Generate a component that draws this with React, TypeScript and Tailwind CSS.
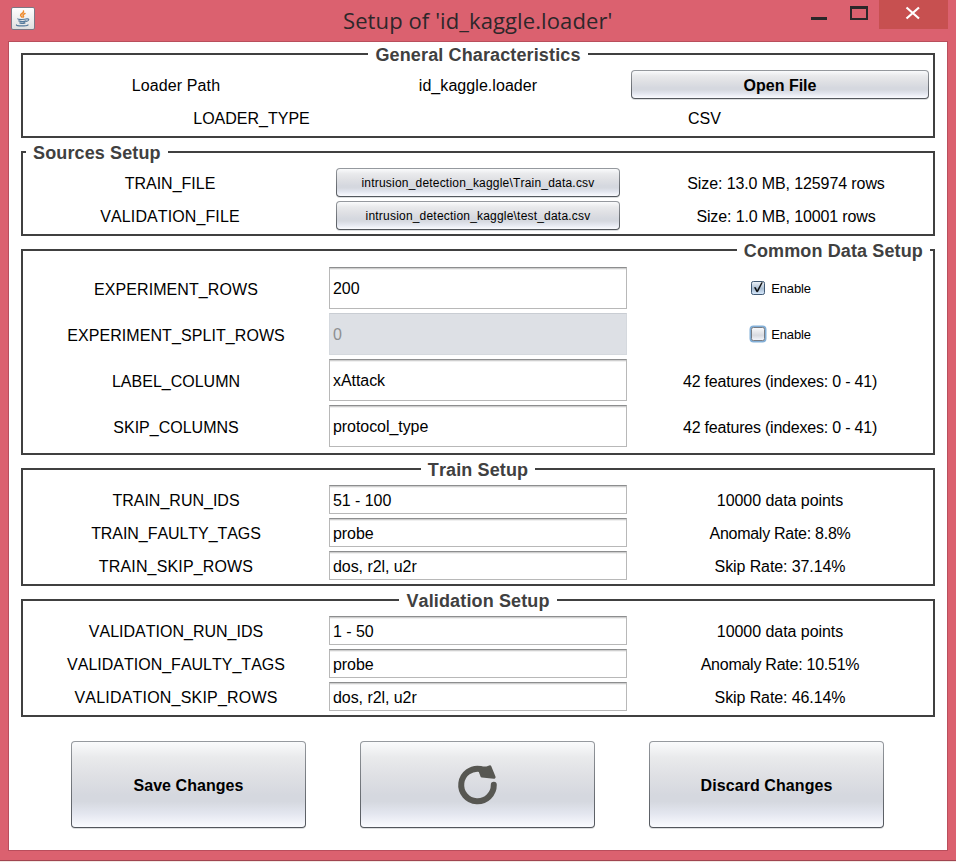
import React from "react";

const FONT = "font-['Liberation_Sans',Arial,sans-serif] [font-kerning:none]";

function Panel({ title, align = "center", pad = "pt-[15px] pb-1", children }: { title: string; align?: "left" | "center" | "right"; pad?: string; children: React.ReactNode }) {
  const line = "h-0.5 bg-[#404040]";
  return (
    <section className="flex w-[914px] flex-col">
      <header className="flex h-0.5 items-center">
        <span className={`${line} ${align === "left" ? "w-[5px]" : "flex-1"}`} />
        <h2 className="px-[7px] pt-0.5 text-[18px] leading-5 font-bold tracking-[0.13px] whitespace-nowrap text-[#404040]">{title}</h2>
        <span className={`${line} ${align === "right" ? "w-[5px]" : "flex-1"}`} />
      </header>
      <div className={`flex flex-col gap-1 border-x-2 border-b-2 border-[#404040] px-1 ${pad}`}>{children}</div>
    </section>
  );
}

function Row({ tall = false, wide = false, children }: { tall?: boolean; wide?: boolean; children: React.ReactNode }) {
  return (
    <div className={`grid auto-cols-fr grid-flow-col items-center justify-items-center ${wide ? "gap-6 px-px" : "gap-1"} ${tall ? "h-[42px]" : "h-[29px]"}`}>
      {children}
    </div>
  );
}

function Text({ className = "pt-0.5", children }: { className?: string; children: React.ReactNode }) {
  return <span className={`whitespace-nowrap ${className}`}>{children}</span>;
}

function Field({ value, disabled = false, tall = false }: { value: string; disabled?: boolean; tall?: boolean }) {
  return (
    <div
      className={`flex h-full w-full items-center border px-[3px] tracking-[-0.06px] ${tall ? "pt-px" : "pt-[3px]"} ${
        disabled
          ? "border-[#d5d9de] border-t-[#c9cdd3] bg-[#dde0e5] text-[#8e8f91]"
          : "border-[#b8b8b8] border-t-[#8d8e8f] bg-white shadow-[inset_0_1px_0_#cfcfcf,inset_0_2px_0_#f0f0f0]"
      }`}
    >
      {value}
    </div>
  );
}

function Button({ className, children }: { className: string; children: React.ReactNode }) {
  return (
    <button className={`rounded-[4px] bg-linear-to-b from-[#969a9f] to-[#52565c] p-px shadow-[0_1px_0_#dcdee0] ${className}`}>
      <span className="flex h-full w-full items-center justify-center rounded-[3px] bg-[linear-gradient(180deg,#fafbfc_0%,#e9eaec_18%,#dfe0e4_40%,#d5d8df_62%,#d5d8df_70%,#e3e6ef_84%,#fafbff_100%)]">
        {children}
      </span>
    </button>
  );
}

function Check({ checked = false }: { checked?: boolean }) {
  return (
    <label className="flex items-center gap-1 text-[13px] tracking-[-0.15px]">
      <svg width="18" height="18" viewBox="0 0 18 18">
        <defs>
          <linearGradient id="on" x2="0" y2="1">
            <stop stopColor="#f0f4f9" />
            <stop offset=".55" stopColor="#a9bdd2" />
            <stop offset="1" stopColor="#d9ebff" />
          </linearGradient>
          <linearGradient id="off" x2="0" y2="1">
            <stop stopColor="#fbfbfc" />
            <stop offset=".6" stopColor="#d8dae0" />
            <stop offset="1" stopColor="#f5f7fd" />
          </linearGradient>
        </defs>
        {!checked && <rect x="1.5" y="1.5" width="15" height="15" rx="3" fill="none" stroke="#82afd8" strokeWidth="2" />}
        <rect x="2.5" y="2.5" width="13" height="13" rx="1.8" fill={checked ? "url(#on)" : "url(#off)"} stroke={checked ? "#3f5873" : "#777c84"} />
        {checked && <path d="M5.4 8.500h1.200l1.500 3.200L12.600 3.600h.8L8.800 12.800H7.600z" fill="#000" stroke="#000" strokeWidth=".5" />}
      </svg>
      <span className="pt-0.5">Enable</span>
    </label>
  );
}

function JavaIcon() {
  return (
    <svg width="24" height="23" viewBox="0 0 24 23">
      <defs>
        <linearGradient id="tile" x2="0" y2="1">
          <stop stopColor="#ffffff" />
          <stop offset="1" stopColor="#dfdfdf" />
        </linearGradient>
      </defs>
      <rect x=".5" y=".5" width="23" height="22" rx="1.5" fill="url(#tile)" stroke="#7c7784" />
      <g fill="none" strokeLinecap="round">
        <path d="M12.500 4c.8 2-3.200 2.600-2.900 4.300.1.700 1 1.100 1.200 1.700M14 6.500c-2 .8-2.500 1.600-1.700 2.300.5.500.2.900-.3 1.300" stroke="#ee8b2d" strokeWidth="1.500" />
        <path d="M6.800 11.800c0 .9 7 .9 9.200 0M7.800 13.900c2 .8 5.500.8 7.200 0M8.800 15.900c1.500.6 3.800.6 5.200 0M16 12c2.500-.5 2.200 1.700-.5 2.300M5.500 17.900c-1 1.200 9.500 1.500 11.500 0" stroke="#54799b" strokeWidth="1.200" />
      </g>
    </svg>
  );
}

function Reload() {
  return (
    <svg width="39" height="39" viewBox="0 0 39 39" className="overflow-visible">
      <path d="M35.800 19.800A16.300 16.300 0 1 1 22.500 4" fill="none" stroke="#575752" strokeWidth="6" strokeLinecap="round" />
      <path d="M21 3h8L31.800 1.900 36 12.200 24 10.900z" fill="#575752" stroke="#575752" strokeWidth="3.200" strokeLinejoin="round" />
    </svg>
  );
}

function Triple({ label, value, info, infoClass = "pt-0.5", labelClass = "pt-0.5" }: { label: string; value: string; info: string; infoClass?: string; labelClass?: string }) {
  return (
    <Row>
      <Text className={labelClass}>{label}</Text>
      <Field value={value} />
      <Text className={infoClass}>{info}</Text>
    </Row>
  );
}

export default function App() {
  return (
    <div className={`flex h-[862px] w-[956px] flex-col overflow-hidden bg-[#db616f] text-[16px] leading-5 text-black ${FONT}`}>
      <header className="flex h-[41px] items-start pl-[11px] pr-2">
        <div className="w-[170px] pt-[7px]"><JavaIcon /></div>
        <h1 className="mt-[5px] ml-[162px] font-['Open_Sans','Noto_Sans',sans-serif] text-[22px] leading-[30px] tracking-[0.1px] whitespace-nowrap text-[#2d272a]">Setup of 'id_kaggle.loader'</h1>
        <svg className="ml-auto" width="146" height="29" viewBox="0 0 146 29" shapeRendering="crispEdges">
          <rect x="9" y="17" width="16" height="3" fill="#2b2729" />
          <path fillRule="evenodd" d="M48 6h18v14H48zM50 9v9h14V9z" fill="#2b2729" />
          <rect x="77" width="69" height="29" fill="#c75050" />
          <path d="M104.500 7.500l12.500 11M117 7.500l-12.500 11" stroke="#fff" strokeWidth="2.200" shapeRendering="auto" />
        </svg>
      </header>
      <main className="mx-2 flex h-[810px] flex-col items-center gap-[13px] border border-[#b94e5c] bg-white pt-[11px]">
        <Panel title="General Characteristics">
          <Row>
            <Text className="pt-0.5 tracking-[0.1px]">Loader Path</Text>
            <Text className="pt-0.5 tracking-[0.06px]">id_kaggle.loader</Text>
            <Button className="h-[29px] w-full font-bold"><Text>Open File</Text></Button>
          </Row>
          <Row>
            <Text>LOADER_TYPE</Text>
            <Text>CSV</Text>
          </Row>
        </Panel>
        <Panel title="Sources Setup" align="left">
          <Row wide>
            <Text>TRAIN_FILE</Text>
            <Button className="h-[29px] w-full text-[12px] tracking-[0.2px]">intrusion_detection_kaggle\Train_data.csv</Button>
            <Text className="pt-0.5 tracking-[-0.1px]">Size: 13.0 MB, 125974 rows</Text>
          </Row>
          <Row wide>
            <Text className="pt-0.5 tracking-[0.1px]">VALIDATION_FILE</Text>
            <Button className="h-[29px] w-full text-[12px] tracking-[0.2px]">intrusion_detection_kaggle\test_data.csv</Button>
            <Text className="pt-0.5 tracking-[-0.13px]">Size: 1.0 MB, 10001 rows</Text>
          </Row>
        </Panel>
        <Panel title="Common Data Setup" align="right" pad="pt-4 pb-1.5">
          <Row tall>
            <Text className="pt-[3px] tracking-[0.08px]">EXPERIMENT_ROWS</Text>
            <Field tall value="200" />
            <Check checked />
          </Row>
          <Row tall>
            <Text className="pt-[3px] tracking-[0.08px]">EXPERIMENT_SPLIT_ROWS</Text>
            <Field tall value="0" disabled />
            <Check />
          </Row>
          <Row tall>
            <Text className="pt-[3px]">LABEL_COLUMN</Text>
            <Field tall value="xAttack" />
            <Text className="pt-[3px] tracking-[-0.21px]">42 features (indexes: 0 - 41)</Text>
          </Row>
          <Row tall>
            <Text className="pt-[3px]">SKIP_COLUMNS</Text>
            <Field tall value="protocol_type" />
            <Text className="pt-[3px] tracking-[-0.21px]">42 features (indexes: 0 - 41)</Text>
          </Row>
        </Panel>
        <Panel title="Train Setup">
          <Triple label="TRAIN_RUN_IDS" value="51 - 100" info="10000 data points" infoClass="pt-0.5 tracking-[-0.05px]" />
          <Triple label="TRAIN_FAULTY_TAGS" value="probe" info="Anomaly Rate: 8.8%" labelClass="pt-0.5 tracking-[-0.06px]" infoClass="pt-0.5 tracking-[-0.27px]" />
          <Triple label="TRAIN_SKIP_ROWS" value="dos, r2l, u2r" info="Skip Rate: 37.14%" labelClass="pt-0.5 tracking-[0.15px]" infoClass="pt-0.5 tracking-[-0.1px]" />
        </Panel>
        <Panel title="Validation Setup">
          <Triple label="VALIDATION_RUN_IDS" value="1 - 50" info="10000 data points" infoClass="pt-0.5 tracking-[-0.05px]" />
          <Triple label="VALIDATION_FAULTY_TAGS" value="probe" info="Anomaly Rate: 10.51%" infoClass="pt-0.5 tracking-[-0.25px]" />
          <Triple label="VALIDATION_SKIP_ROWS" value="dos, r2l, u2r" info="Skip Rate: 46.14%" labelClass="pt-0.5 tracking-[0.2px]" infoClass="pt-0.5 tracking-[-0.1px]" />
        </Panel>
        <div className="mt-[11px] mr-[1px] flex gap-[54px] font-bold">
          <Button className="h-[87px] w-[235px]"><Text className="pt-0.5 tracking-[0.06px]">Save Changes</Text></Button>
          <Button className="h-[87px] w-[235px]"><Reload /></Button>
          <Button className="h-[87px] w-[235px]"><Text className="pt-0.5 tracking-[0.08px]">Discard Changes</Text></Button>
        </div>
      </main>
      <footer className="mt-[9px] h-0.5 border-t border-[#a04450] bg-[#f3e9e4]" />
    </div>
  );
}
